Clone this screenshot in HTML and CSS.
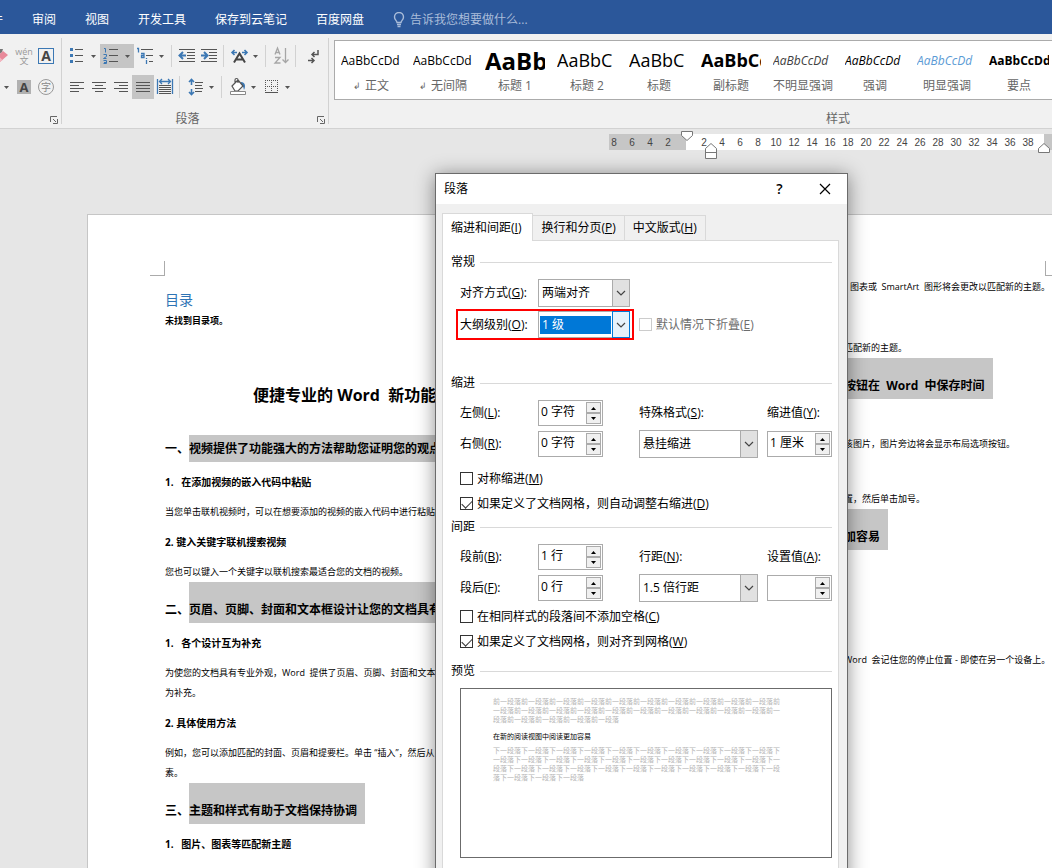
FILE: index.html
```
<!DOCTYPE html>
<html lang="zh-CN">
<head>
    <meta charset="UTF-8">
    <title>段落</title>
    <meta name="viewport" content="width=device-width, initial-scale=1">
    <link rel="stylesheet" href="styles.css">
</head>
<body>
    <svg class="defs" width="0" height="0" aria-hidden="true">
        <symbol id="caret" viewBox="0 0 12 24"><path d="M3 11h5l-2.500 3z" fill="#555"/></symbol>
        <symbol id="chevron" viewBox="0 0 10 6"><path d="M1 1l4 4 4-4" fill="none" stroke="#444" stroke-width="1.2"/></symbol>
        <symbol id="up" viewBox="0 0 7 4"><path d="M1 4h5L3.500 1z"/></symbol>
        <symbol id="down" viewBox="0 0 7 4"><path d="M1 0h5L3.500 3z"/></symbol>
        <symbol id="launcher" viewBox="0 0 8 8"><path d="M.5 6V.5H7M3 3l3 3M7.500 3v4.500H3" fill="none" stroke="#666"/></symbol>
    </svg>

    <nav class="tabs">
        <a href="#">邮件</a>
        <a href="#">审阅</a>
        <a href="#">视图</a>
        <a href="#">开发工具</a>
        <a href="#">保存到云笔记</a>
        <a href="#">百度网盘</a>
        <a href="#" class="tell-me">
            <svg width="12" height="16" viewBox="0 0 12 16" fill="none" stroke="#a9bcd9" stroke-width="1.4"><path d="M4 10.500C4 8.500 1.500 8 1.500 5a4.500 4.500 0 0 1 9 0c0 3-2.500 3.500-2.500 5.500zM4 12.500h4M4.500 14.500h3"/></svg>
            告诉我您想要做什么...
        </a>
    </nav>

    <section class="ribbon">
        <div class="group font-group">
            <div class="tool-row">
                <button class="tool" aria-label="清除格式"><svg width="22" height="24"><path d="M4 14l8-7 5 4-8 7z" fill="#e8899a"/><path d="M4 14l3 -2.500 4.500 4.500-2.500 2z" fill="#f3b6c0"/><path d="M8 5l4 0-1 3-4 3z" fill="#777"/></svg></button>
                <button class="tool wen" aria-label="拼音指南"><span>wén</span><span>文</span></button>
                <button class="tool" aria-label="字符边框"><span class="boxed">A</span></button>
            </div>
            <div class="tool-row">
                <svg width="12" height="24"><use href="#caret"/></svg>
                <button class="tool" aria-label="字符底纹"><span class="shaded">A</span></button>
                <button class="tool" aria-label="带圈字符"><span class="circled">字</span></button>
            </div>
            <div class="group-name"><svg class="launcher" width="8" height="8"><use href="#launcher"/></svg></div>
        </div>

        <div class="group para-group">
            <div class="tool-row">
                <button class="tool" aria-label="项目符号">
                    <svg width="22" height="24"><path d="M4 4h3v3H4zM4 10h3v3H4zM4 16h3v3H4z" fill="#3c78b4"/><path d="M9 5.500h8M9 11.500h8M9 17.500h8" stroke="#555"/></svg>
                    <svg width="12" height="24"><use href="#caret"/></svg>
                </button>
                <button class="tool on" aria-label="编号">
                    <svg width="22" height="24"><path d="M4 4.500h1.500v4M3.500 10.500h3v2l-3 2h3M3.500 16.500h3v3h-3M4 18.500h2" fill="none" stroke="#3c78b4"/><path d="M9 5.500h9M9 11.500h9M9 17.500h9" stroke="#555"/></svg>
                    <svg width="12" height="24"><use href="#caret"/></svg>
                </button>
                <button class="tool" aria-label="多级列表">
                    <svg width="22" height="24"><path d="M3 4.500h1.500v4M7 9.500h3v4H7.500v-2h2M12.500 16v4M12.500 14v1" fill="none" stroke="#3c78b4" stroke-width="1.300"/><path d="M7 5.500h12M12 11.500h7M15 17.500h4" stroke="#555"/></svg>
                    <svg width="12" height="24"><use href="#caret"/></svg>
                </button>
                <i class="sep"></i>
                <button class="tool" aria-label="减少缩进量"><svg width="22" height="24"><path d="M3 5.500h16M11 8.500h8M11 11.500h8M11 14.500h8M3 17.500h16" stroke="#555"/><path d="M10 11.500H4M7 8l-3.500 3.500L7 15" fill="none" stroke="#3c78b4" stroke-width="2"/></svg></button>
                <button class="tool" aria-label="增加缩进量"><svg width="22" height="24"><path d="M3 5.500h16M11 8.500h8M11 11.500h8M11 14.500h8M3 17.500h16" stroke="#555"/><path d="M3 11.500h6M6 8l3.500 3.500L6 15" fill="none" stroke="#3c78b4" stroke-width="2"/></svg></button>
                <i class="sep"></i>
                <button class="tool" aria-label="中文版式">
                    <svg width="22" height="24"><path d="M6 18.500l5.500-9 5.500 9M7.500 15.500h8" fill="none" stroke="#444" stroke-width="2"/><path d="M9 8.500H4M6.500 6L4 8.500 6.500 11M14 8.500h5M16.500 6l2.500 2.500-2.500 2.500" fill="none" stroke="#3c78b4" stroke-width="1.600"/></svg>
                    <svg width="12" height="24"><use href="#caret"/></svg>
                </button>
                <i class="sep"></i>
                <button class="tool" aria-label="排序"><svg width="22" height="24" fill="none" stroke="#a6a6a6" stroke-width="1.300"><path d="M5 10.500l2.500-6.500 2.500 6.500M6 8.500h3M5 13.500h5l-5 5.500h5.500M15.500 4v14M12.500 15.500l3 3 3-3"/></svg></button>
                <i class="sep"></i>
                <button class="tool" aria-label="显示编辑标记"><svg width="22" height="24" fill="none" stroke="#555" stroke-width="1.500"><path d="M18 6v4.500h-6M14.500 8L12 10.500l2.500 2.500M8 16.500h6M11.500 14l2.500 2.500-2.500 2.500"/></svg></button>
            </div>
            <div class="tool-row">
                <button class="tool" aria-label="左对齐"><svg width="22" height="24"><path d="M4 7.500h14M4 10.500h9M4 13.500h14M4 16.500h9" stroke="#555"/></svg></button>
                <button class="tool" aria-label="居中"><svg width="22" height="24"><path d="M4 7.500h14M7 10.500h8M4 13.500h14M7 16.500h8" stroke="#555"/></svg></button>
                <button class="tool" aria-label="右对齐"><svg width="22" height="24"><path d="M4 7.500h14M9 10.500h9M4 13.500h14M9 16.500h9" stroke="#555"/></svg></button>
                <button class="tool on" aria-label="两端对齐"><svg width="22" height="24"><path d="M4 7.500h14M4 10.500h14M4 13.500h14M4 16.500h14" stroke="#555"/></svg></button>
                <button class="tool" aria-label="分散对齐"><svg width="22" height="24" fill="none"><path d="M3.500 4v15M18.500 4v15M6 6.500h10M8 4L5.500 6.500 8 9M14 4l2.500 2.500L14 9" stroke="#3c78b4" stroke-width="1.300"/><path d="M5 10.500h12M5 12.500h12M5 14.500h12M5 16.500h12M5 18.500h12" stroke="#555"/></svg></button>
                <i class="sep"></i>
                <button class="tool" aria-label="行和段落间距">
                    <svg width="22" height="24" fill="none"><path d="M7.500 5v5M7.500 14v5M5 7l2.500-2.500L10 7M5 17l2.500 2.500L10 17" stroke="#3c78b4" stroke-width="1.600"/><path d="M11 7.500h8M11 10.500h7M11 13.500h8M11 16.500h7" stroke="#555"/></svg>
                    <svg width="12" height="24"><use href="#caret"/></svg>
                </button>
                <i class="sep"></i>
                <button class="tool" aria-label="底纹">
                    <svg width="22" height="24"><path d="M15 7c4 0 5 4 3 8-.5-3-1-4-4-5z" fill="#3c78b4"/><path d="M6 11l6-6 5 6-5 5H9zM9 9V5c0-2 3-2 3 0v3" fill="#fff" stroke="#555" stroke-width="1.200"/><path d="M4.500 16.500h15v3h-15z" fill="#fff" stroke="#888"/></svg>
                    <svg width="12" height="24"><use href="#caret"/></svg>
                </button>
                <button class="tool" aria-label="边框">
                    <svg width="22" height="24" fill="none" stroke="#555"><path d="M5.500 5v13M11.500 5v13M17.500 5v13M5 5.500h13M5 11.500h13" stroke-dasharray="1 1"/><path d="M5 17.500h13"/></svg>
                    <svg width="12" height="24"><use href="#caret"/></svg>
                </button>
            </div>
            <div class="group-name">段落<svg class="launcher" width="8" height="8"><use href="#launcher"/></svg></div>
        </div>

        <div class="group style-group">
            <div class="gallery">
                <button class="style"><span class="sample">AaBbCcDd</span><span class="style-name"><small>↲</small> 正文</span></button>
                <button class="style"><span class="sample">AaBbCcDd</span><span class="style-name"><small>↲</small> 无间隔</span></button>
                <button class="style"><span class="sample huge">AaBb</span><span class="style-name">标题 1</span></button>
                <button class="style"><span class="sample big">AaBbC</span><span class="style-name">标题 2</span></button>
                <button class="style"><span class="sample big">AaBbC</span><span class="style-name">标题</span></button>
                <button class="style"><span class="sample big strong">AaBbCc</span><span class="style-name">副标题</span></button>
                <button class="style"><span class="sample em subtle">AaBbCcDd</span><span class="style-name">不明显强调</span></button>
                <button class="style"><span class="sample em">AaBbCcDd</span><span class="style-name">强调</span></button>
                <button class="style"><span class="sample em intense">AaBbCcDd</span><span class="style-name">明显强调</span></button>
                <button class="style"><span class="sample strong">AaBbCcDd</span><span class="style-name">要点</span></button>
            </div>
            <div class="group-name">样式</div>
        </div>
    </section>

    <main class="workspace">
        <div class="ruler">
            <div class="ruler-margin"><span>8</span><span>6</span><span>4</span><span>2</span></div>
            <div class="ruler-body">
                <span>2</span><span>4</span><span>6</span><span>8</span><span>10</span><span>12</span><span>14</span><span>16</span><span>18</span><span>20</span><span>22</span><span>24</span><span>26</span><span>28</span><span>30</span><span>32</span><span>34</span><span>36</span><span>38</span>
                <svg class="mark first-line" width="12" height="10"><path d="M.5.500h11v4l-5.500 5-5.500-5z" fill="#fff" stroke="#777"/></svg>
                <svg class="mark hanging" width="12" height="16"><path d="M.5 15.500v-10L6 .500l5.500 5v10zM.5 9.500h11" fill="#fff" stroke="#777"/></svg>
                <svg class="mark right" width="12" height="10"><path d="M.5 9.500v-4L6 .500l5.500 5v4z" fill="#fff" stroke="#777"/></svg>
            </div>
            <div class="ruler-end"></div>
        </div>

        <div class="pages">
            <article class="page">
                <i class="corner"></i>
                <p class="toc">目录</p>
                <p><b>未找到目录项。</b></p>
                <h1>便捷专业的 Word&nbsp; 新功能</h1>
                <h2 class="first"><span>一、</span><mark>视频提供了功能强大的方法帮助您证明您的观点</mark></h2>
                <h3>1.&nbsp;&nbsp; 在添加视频的嵌入代码中粘贴</h3>
                <p>当您单击联机视频时，可以在想要添加的视频的嵌入代码中进行粘贴</p>
                <h3>2. 键入关键字联机搜索视频</h3>
                <p>您也可以键入一个关键字以联机搜索最适合您的文档的视频。</p>
                <h2><span>二、</span><mark>页眉、页脚、封面和文本框设计让您的文档具有</mark></h2>
                <h3>1.&nbsp;&nbsp; 各个设计互为补充</h3>
                <p>为使您的文档具有专业外观，Word&nbsp; 提供了页眉、页脚、封面和文本框<br>为补充。</p>
                <h3>2. 具体使用方法</h3>
                <p>例如，您可以添加匹配的封面、页眉和提要栏。单击 “插入”，然后从<br>素。</p>
                <h2><span>三、</span><mark>主题和样式有助于文档保持协调</mark></h2>
                <h3>1.&nbsp;&nbsp; 图片、图表等匹配新主题</h3>
            </article>
            <article class="page page-next">
                <i class="corner corner-right"></i>
                <p class="to-margin hang">图表或&nbsp; SmartArt&nbsp; 图形将会更改以匹配新的主题。</p>
                <p class="gap-41">匹配新的主题。</p>
                <h2><mark>按钮在&nbsp; Word&nbsp; 中保存时间</mark></h2>
                <p class="gap-35">该图片，图片旁边将会显示布局选项按钮。</p>
                <p class="gap-35">置，然后单击加号。</p>
                <h2><mark>加容易</mark></h2>
                <p class="gap-100 to-margin">Word&nbsp; 会记住您的停止位置 - 即使在另一个设备上。</p>
            </article>
        </div>
    </main>

    <div class="dialog" role="dialog" aria-labelledby="dialogTitle">
        <header class="dialog-bar">
            <span id="dialogTitle">段落</span>
            <button aria-label="帮助">?</button>
            <button aria-label="关闭"><svg width="12" height="12"><path d="M1 1l10 10M11 1L1 11" stroke="#000" stroke-width="1.200"/></svg></button>
        </header>
        <div class="dialog-tabs" role="tablist">
            <button role="tab" class="active">缩进和间距(<u>I</u>)</button>
            <button role="tab">换行和分页(<u>P</u>)</button>
            <button role="tab">中文版式(<u>H</u>)</button>
        </div>
        <form class="panel">
            <div class="legend">常规</div>
            <div class="line">
                <label for="align">对齐方式(<u>G</u>):</label>
                <span class="combo"><select id="align"><option>两端对齐</option></select><span class="drop"><svg width="10" height="6"><use href="#chevron"/></svg></span></span>
            </div>
            <div class="line">
                <div class="callout">
                    <label for="outline">大纲级别(<u>O</u>):</label>
                    <span class="combo focused"><select id="outline"><option>1 级</option></select><span class="drop"><svg width="10" height="6"><use href="#chevron"/></svg></span></span>
                </div>
                <label class="check off"><input type="checkbox" disabled><span>默认情况下折叠(<u>E</u>)</span></label>
            </div>

            <div class="legend gap-34">缩进</div>
            <div class="fields">
                <label for="left">左侧(<u>L</u>):</label>
                <span class="spin"><input id="left" type="text" value="0 字符"><span class="arrows"><button type="button" aria-label="增加"><svg width="7" height="4"><use href="#up"/></svg></button><button type="button" aria-label="减少"><svg width="7" height="4"><use href="#down"/></svg></button></span></span>
                <label for="special">特殊格式(<u>S</u>):</label>
                <label for="by">缩进值(<u>Y</u>):</label>
                <label for="right">右侧(<u>R</u>):</label>
                <span class="spin"><input id="right" type="text" value="0 字符"><span class="arrows"><button type="button" aria-label="增加"><svg width="7" height="4"><use href="#up"/></svg></button><button type="button" aria-label="减少"><svg width="7" height="4"><use href="#down"/></svg></button></span></span>
                <span class="combo wide"><select id="special"><option>悬挂缩进</option></select><span class="drop"><svg width="10" height="6"><use href="#chevron"/></svg></span></span>
                <span class="spin"><input id="by" type="text" value="1 厘米"><span class="arrows"><button type="button" aria-label="增加"><svg width="7" height="4"><use href="#up"/></svg></button><button type="button" aria-label="减少"><svg width="7" height="4"><use href="#down"/></svg></button></span></span>
            </div>
            <div class="checks gap-9">
                <label class="check"><input type="checkbox"><span>对称缩进(<u>M</u>)</span></label>
                <label class="check"><input type="checkbox" checked><span>如果定义了文档网格，则自动调整右缩进(<u>D</u>)</span></label>
            </div>

            <div class="legend gap-2">间距</div>
            <div class="fields">
                <label for="before">段前(<u>B</u>):</label>
                <span class="spin"><input id="before" type="text" value="1 行"><span class="arrows"><button type="button" aria-label="增加"><svg width="7" height="4"><use href="#up"/></svg></button><button type="button" aria-label="减少"><svg width="7" height="4"><use href="#down"/></svg></button></span></span>
                <label for="spacing">行距(<u>N</u>):</label>
                <label for="at">设置值(<u>A</u>):</label>
                <label for="after">段后(<u>F</u>):</label>
                <span class="spin"><input id="after" type="text" value="0 行"><span class="arrows"><button type="button" aria-label="增加"><svg width="7" height="4"><use href="#up"/></svg></button><button type="button" aria-label="减少"><svg width="7" height="4"><use href="#down"/></svg></button></span></span>
                <span class="combo wide"><select id="spacing"><option>1.5 倍行距</option></select><span class="drop"><svg width="10" height="6"><use href="#chevron"/></svg></span></span>
                <span class="spin"><input id="at" type="text" value=""><span class="arrows"><button type="button" aria-label="增加"><svg width="7" height="4"><use href="#up"/></svg></button><button type="button" aria-label="减少"><svg width="7" height="4"><use href="#down"/></svg></button></span></span>
            </div>
            <div class="checks gap-3">
                <label class="check"><input type="checkbox"><span>在相同样式的段落间不添加空格(<u>C</u>)</span></label>
                <label class="check"><input type="checkbox" checked><span>如果定义了文档网格，则对齐到网格(<u>W</u>)</span></label>
            </div>

            <div class="legend gap-8">预览</div>
            <div class="preview">
                <p id="prevText"></p>
                <p class="current">在新的阅读视图中阅读更加容易</p>
                <p id="nextText"></p>
            </div>
        </form>
    </div>

    <script>
        // Filler text around the current paragraph
        document.getElementById('prevText').textContent = '前一段落'.repeat(25);
        document.getElementById('nextText').textContent = '下一段落'.repeat(34);
    </script>
</body>
</html>
```

FILE: styles.css
```
* { box-sizing: border-box; }
body { margin: 0; height: 100vh; overflow: hidden; display: flex; flex-direction: column; position: relative; background: #e6e6e6; color: #000; font: 12px/18px "Open Sans", "Noto Sans CJK SC", sans-serif; }
button, input, select { font: inherit; color: inherit; margin: 0; padding: 0; }
button { border: none; background: none; }
p, h1, h2, h3 { margin: 0; }
svg { display: block; flex: none; }
.defs { position: absolute; }

/* Ribbon tabs */
.tabs { flex: none; height: 34px; padding-top: 6px; margin-left: -21px; padding-right: 21px; display: flex; align-items: center; gap: 29px; background: #2b579a; white-space: nowrap; }
.tabs a { color: #fff; text-decoration: none; }
.tabs .tell-me { display: flex; align-items: center; gap: 5px; color: #a9bcd9; }

/* Ribbon */
.ribbon { flex: none; display: flex; height: 95px; background: #f1f1f1; border-bottom: 1px solid #d2d2d2; overflow: hidden; }
.group { flex: none; position: relative; padding-top: 10px; display: flex; flex-direction: column; gap: 7px; }
.group:not(:last-child)::after { content: ""; position: absolute; right: 0; top: 4px; bottom: 4px; width: 1px; background: #d2d2d2; }
.font-group { width: 62px; }
.font-group .tool-row { justify-content: flex-end; padding-right: 5px; }
.para-group { width: 267px; padding-left: 4px; }
.tool-row { display: flex; height: 24px; }
.tool { min-width: 22px; height: 24px; display: flex; align-items: center; justify-content: center; }
.tool.on { background: #c5c5c5; }
.sep { width: 1px; margin: 1px 4px 1px 3px; background: #d2d2d2; }
.wen { flex-direction: column; font-size: 9px; line-height: 9px; color: #999; }
.boxed { width: 16px; height: 16px; border: 1px solid #3c78b4; font: bold 14px/14px "Open Sans", sans-serif; color: #444; }
.shaded { width: 14px; height: 14px; background: #b1b1b1; font: bold 13px/14px "Open Sans", sans-serif; color: #444; }
.circled { width: 16px; height: 16px; border: 1px solid #999; border-radius: 50%; font-size: 10px; line-height: 14px; color: #888; }
.group-name { position: relative; margin-top: 4px; height: 18px; padding-right: 20px; text-align: center; color: #666; }
.launcher { position: absolute; right: 4px; top: 6px; }

.style-group { width: 1013px; padding: 6px 0 0 5px; gap: 8px; }
.style-group .group-name { margin-top: 2px; padding: 0; }
.gallery { display: flex; height: 60px; border: 1px solid #ababab; border-right: none; background: #fff; overflow: hidden; }
.style { flex: none; width: 72px; height: 56px; padding: 0 6px; text-align: center; }
.sample { display: block; height: 33px; line-height: 33px; text-align: left; white-space: nowrap; overflow: hidden; }
.huge { font-size: 24px; font-weight: bold; }
.big { font-size: 18px; }
.strong { font-weight: bold; }
.em { font-style: italic; }
.subtle { color: #404040; }
.intense { color: #5b9bd5; }
.style-name { display: flex; justify-content: center; gap: 4px; white-space: nowrap; color: #666; }
.style-name small { font-size: 9px; }

/* Ruler */
.workspace { flex: 1; min-height: 0; padding-top: 5px; overflow: hidden; }
.ruler { display: flex; height: 16px; margin-left: 609px; font: 10px/17px "Liberation Sans", sans-serif; color: #444; }
.ruler span { flex: none; width: 18px; text-align: center; }
.ruler-margin { flex: none; width: 77px; padding-right: 9px; display: flex; justify-content: flex-end; background: #c6c6c6; }
.ruler-body { position: relative; flex: 1; padding-left: 9px; display: flex; background: #fff; }
.ruler-end { width: 8px; background: #c6c6c6; }
.mark { position: absolute; }
.first-line { left: -5px; top: -3px; }
.hanging { left: 19px; top: 9px; }
.right { right: -6px; top: 9px; }

/* Document pages */
.pages { display: flex; gap: 18px; margin: 64px 0 0 87px; }
.page { position: relative; flex: none; width: 541px; height: 800px; padding: 75px 77px 0; border: 1px solid #c6c6c6; background: #fff; font-size: 9px; line-height: 20px; white-space: nowrap; }
.page-next { width: 477px; padding: 62px 78px 0 197px; }
.corner { position: absolute; left: 62px; top: 46px; width: 15px; height: 15px; border: solid #ababab; border-width: 0 1px 1px 0; }
.corner-right { left: auto; right: 62px; border-width: 0 0 1px 1px; }
.toc { margin-bottom: 1px; font-size: 14px; color: #2e74b5; }
.page h1 { margin: 54px 0 30px 88px; font-size: 16px; line-height: 20px; }
.page h2 { display: flex; font-size: 12px; line-height: 27px; }
.page h2 span { width: 24px; padding-top: 14px; }
.page h2 mark { padding: 14px 8px 0 0; background: #c6c6c6; color: inherit; }
.page h2.first span, .page h2.first mark { padding-top: 0; }
.page h3 { font-size: 10px; line-height: 40px; }
.to-margin { text-align: right; }
.hang { margin-right: -6px; }
.gap-2 { margin-top: 2px; }
.gap-3 { margin-top: 3px; }
.gap-8 { margin-top: 8px; }
.gap-9 { margin-top: 9px; }
.gap-34 { margin-top: 34px; }
.gap-35 { margin-top: 35px; }
.gap-41 { margin-top: 41px; }
.gap-100 { margin-top: 100px; }

/* Paragraph dialog */
.dialog { position: absolute; left: 435px; top: 173px; width: 413px; padding-bottom: 45px; background: #f0f0f0; border: 1px solid #6b6b6b; box-shadow: 0 2px 18px rgba(0, 0, 0, 0.45); }
.dialog-bar { display: flex; align-items: center; height: 30px; padding-left: 8px; background: #fff; }
.dialog-bar span { flex: 1; }
.dialog-bar button { width: 45px; height: 30px; display: flex; align-items: center; justify-content: center; font-size: 14px; font-weight: 600; }
.dialog-tabs { display: flex; align-items: flex-end; padding: 9px 6px 0; }
.dialog-tabs button { height: 25px; padding: 0 8px; border: 1px solid #d9d9d9; border-left: none; border-bottom: none; line-height: 24px; white-space: nowrap; }
.dialog-tabs .active { position: relative; z-index: 1; height: 28px; margin-bottom: -1px; padding: 0 11px 0 8px; border-left: 1px solid #d9d9d9; background: #fff; }
.panel { margin: 0 8px 0 6px; padding: 12px 6px 32px 8px; background: #fff; border: 1px solid #d9d9d9; }
.legend { display: flex; align-items: center; gap: 5px; }
.legend::after { content: ""; flex: 1; height: 1px; background: #d9d9d9; }
.line { display: flex; align-items: center; padding-left: 9px; }
.line label:first-child { width: 78px; }
.legend + .line { margin: 8px 0 2px; }
.callout { display: flex; align-items: center; width: 178px; height: 31px; margin-left: -4px; margin-right: 5px; padding-left: 2px; border: 2px solid #f00; }
.combo { position: relative; display: block; width: 92px; height: 28px; }
.combo.wide { width: 119px; }
.combo select { appearance: none; display: block; width: 100%; height: 100%; padding: 0 20px 0 3px; border: 1px solid #ababab; border-radius: 0; background: #fff; outline: none; }
.drop { position: absolute; right: 0; top: 0; bottom: 0; width: 18px; display: flex; align-items: center; justify-content: center; border: 1px solid #ababab; background: #e1e1e1; pointer-events: none; }
.combo.focused { height: 27px; }
.focused select { color: #fff; background: linear-gradient(#0078d7, #0078d7) no-repeat 1px 4px / 71px 18px #fff; }
.focused .drop { border-color: #0078d7; background: #e5f1fb; }
.fields { display: grid; grid-template-columns: 78px 101px 128px 65px; grid-auto-rows: 26px; row-gap: 5px; align-items: center; margin-top: 8px; padding-left: 9px; }
.spin { display: flex; width: 65px; height: 26px; padding: 1px; border: 1px solid #ababab; background: #fff; }
.spin input { flex: 1; min-width: 0; padding: 0 1px 2px; border: none; background: none; outline: none; }
.arrows { display: flex; flex-direction: column; width: 15px; }
.arrows button { flex: 1; display: flex; align-items: center; justify-content: center; border: 1px solid #ababab; background: #f0f0f0; }
.checks { padding-left: 9px; }
.check { display: flex; align-items: center; gap: 4px; line-height: 25px; white-space: nowrap; }
.check input { appearance: none; flex: none; width: 13px; height: 13px; border: 1px solid #333; background: #fff; }
.check input:checked::after { content: ""; display: block; width: 9px; height: 5px; margin: 2px 0 0 1px; border: solid #333; border-width: 0 0 1px 1px; transform: rotate(-45deg); }
.check.off { color: #6d6d6d; }
.check.off input { border-color: #ccc; }
.preview { height: 170px; margin: 8px 0 0 9px; padding: 8px 51px 0 32px; border: 1px solid #6b6b6b; color: #b5b5b5; font-size: 7px; line-height: 9px; word-break: break-all; }
.preview .current { margin: 8px 0 5px; color: #000; }
```
